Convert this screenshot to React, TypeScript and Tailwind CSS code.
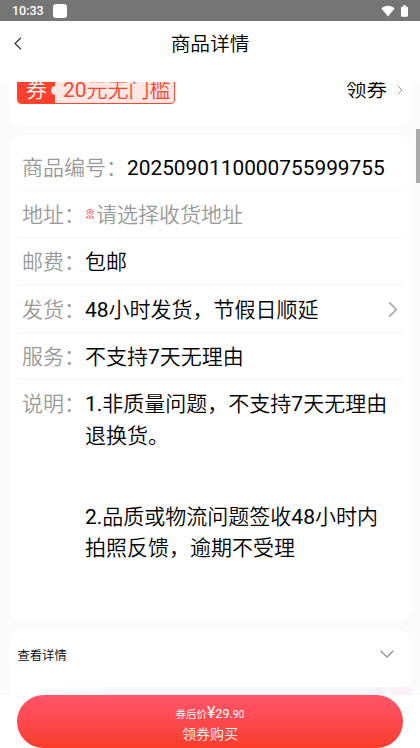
import type { ReactNode } from "react";

function Chevron({ className }: { className: string }) {
  return (
    <svg viewBox="0 0 10 18" fill="none" stroke="currentColor" strokeWidth="1.8" className={className}>
      <path d="M1 1.5 8.5 9 1 16.5" />
    </svg>
  );
}

function Num({ children }: { children: ReactNode }) {
  return <span className="font-normal">{children}</span>;
}

function Row({ label, children, arrow }: { label: string; children: ReactNode; arrow?: boolean }) {
  return (
    <div className="flex h-[47.3px] shrink-0 items-center border-b border-[#f7f7f7] pt-[4px] pl-[4.500px]">
      <span className="shrink-0 text-[#999]">{label}：</span>
      <div className="flex flex-1 items-center whitespace-nowrap">{children}</div>
      {arrow && <Chevron className="mr-[5px] mb-[3px] h-[17px] w-[10px] text-[#aaa]" />}
    </div>
  );
}

function StatusBar() {
  return (
    <div className="flex h-[21px] shrink-0 items-center bg-[#757575] pr-3 pl-[12px] text-white">
      <span className="pt-px text-[12.5px] leading-none font-medium">10:33</span>
      <span className="ml-[9px] h-[14px] w-[14px] rounded-[3px] bg-white" />
      <svg viewBox="0 0 14 12" className="ml-auto h-[12px] w-[14px]" fill="currentColor">
        <path d="M.4 3.5C4-.2 10-.2 13.600 3.500L7 11.500Z" />
      </svg>
      <svg viewBox="0 0 8 13" className="ml-[6px] h-[12px] w-[7px]" fill="currentColor">
        <path d="M2.500 0h3v1.500H7q1 0 1 1V12q0 1-1 1H1q-1 0-1-1V2.500q0-1 1-1h1.500Z" />
      </svg>
    </div>
  );
}

export default function App() {
  return (
    <div className="flex h-[748px] w-[420px] flex-col overflow-hidden bg-white font-['Roboto','Noto_Sans_CJK_SC_DemiLight','Noto_Sans_CJK_SC',sans-serif] font-[350] text-black">
      <StatusBar />
      <header className="grid h-[61px] shrink-0 grid-cols-[60px_1fr_60px] pt-[8px]">
        <svg viewBox="0 0 8 13" className="mt-2 ml-[14px] h-[13px] w-[8px]" fill="none" stroke="#333" strokeWidth="1.2">
          <path d="M7 .7 1 6.500 7 12.300" />
        </svg>
        <h1 className="pt-px text-center text-[19.700px] leading-[29px] font-[350]">商品详情</h1>
      </header>

      <main className="relative h-[613px] shrink-0 overflow-hidden bg-[#fafafa] px-[9px]">
        <section className="-mt-3 flex h-[56px] items-start justify-between rounded-[12px] bg-white pt-[7px] pr-[8px] pl-[8px]">
          <div className="flex h-[26.500px] overflow-hidden rounded-[4px] border border-[#fe4530] bg-[#ffe7e4] text-[21px] leading-[24px] text-[#fe4530]">
            <span className="relative w-[37px] bg-[#fe402d] pl-[8px] text-white">
              券
              <span className="absolute top-[8px] -right-px h-[9px] w-[5px] rounded-l-full bg-[#ffe7e4]" />
            </span>
            <span className="w-[119px] pl-2 whitespace-nowrap"><Num>20</Num>元无门槛</span>
          </div>
          <div className="flex items-center text-[20.500px] leading-[26px]">
            领券
            <Chevron className="ml-[10px] h-[10px] w-[6px] text-[#999]" />
          </div>
        </section>

        <section className="mt-[9px] h-[486px] rounded-[12px] bg-white px-[8.500px] pt-[8.500px] text-[21px] leading-[31.500px]">
          <Row label="商品编号"><span className="text-[20.850px] font-normal">2025090110000755999755</span></Row>
          <Row label="地址">
            <svg viewBox="0 0 10 11" className="mr-[1px] mb-[3px] h-[10px] w-[10px]" fill="none" stroke="#f34b4b" strokeWidth=".9">
              <path d="M5 8.500C2.800 6.700 1.700 5.300 1.700 3.700a3.300 3.300 0 0 1 6.600 0C8.300 5.300 7.200 6.700 5 8.500ZM2.700 7.700.6 9.900h8.800L7.300 7.700" />
              <circle cx="5" cy="3.700" r="1.300" />
            </svg>
            <span className="text-[#999]">请选择收货地址</span>
          </Row>
          <Row label="邮费">包邮</Row>
          <Row label="发货" arrow><Num>48</Num>小时发货，节假日顺延</Row>
          <Row label="服务">不支持<Num>7</Num>天无理由</Row>
          <div className="flex pt-[9.500px] pl-[4.500px]">
            <span className="shrink-0 text-[#999]">说明：</span>
            <div className="w-[305px]">
              <p><Num>1.</Num>非质量问题，不支持<Num>7</Num>天无理由退换货。</p>
              <p className="mt-[49.500px]"><Num>2.</Num>品质或物流问题签收<Num>48</Num>小时内拍照反馈，逾期不受理</p>
            </div>
          </div>
        </section>

        <section className="mt-[9px] h-[80px] rounded-t-[12px] bg-white">
          <div className="flex h-[57px] items-start justify-between pt-[17px] pr-[17px] pl-[8.500px] text-[12.300px] leading-[18px]">
            <span>查看详情</span>
            <svg viewBox="0 0 14 8" className="mt-[3px] h-[8px] w-[14px]" fill="none" stroke="#999" strokeWidth="1.500">
              <path d="m.7.7 6.300 6.300L13.300.7" />
            </svg>
          </div>
          <div className="flex h-[8px]">
            <span className="w-[56px]" />
            <span className="w-[38px] bg-[#fffbfd]" />
            <span className="flex-1 bg-[#f6f7ff]" />
            <span className="w-[8px] bg-[#fbf0f6]" />
            <span className="w-[8px] bg-[#f6f7ff]" />
            <span className="w-[20px] bg-[#fbf0f6]" />
          </div>
        </section>

        <span className="absolute top-[47px] right-0 h-[54px] w-[4px] bg-[#aaa]" />
      </main>

      <footer className="h-[53px] shrink-0 px-[17.400px]">
        <button className="flex h-[53px] w-full flex-col items-center rounded-full bg-gradient-to-b from-[#ff546a] to-[#fa3c28] pt-[8px] text-white">
          <span className="flex items-baseline text-[10.500px] leading-[20px]">
            券后价<b className="text-[16px] font-normal">¥</b>
            <span className="text-[12.500px] font-normal">29.</span>
            <Num>90</Num>
          </span>
          <span className="text-[14px] leading-[18px]">领券购买</span>
        </button>
      </footer>
    </div>
  );
}
